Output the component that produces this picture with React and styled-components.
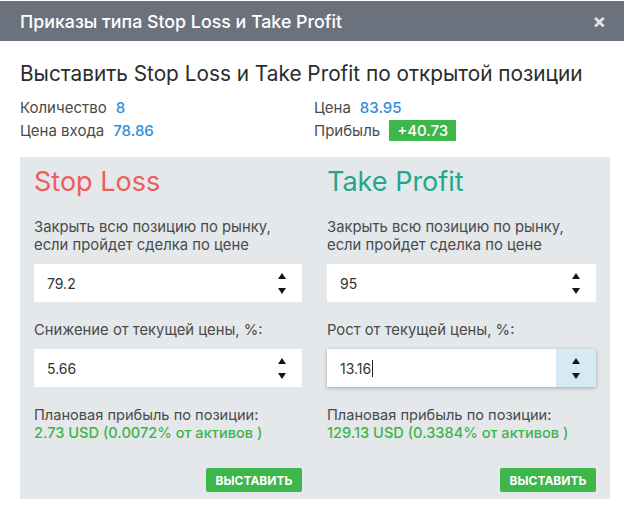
import styled, { createGlobalStyle } from 'styled-components';

const GlobalStyle = createGlobalStyle`
  body {
    margin: 0;
    background: #ffffff;
    font-family: Inter, 'Noto Sans', sans-serif;
  }
`;

const Dialog = styled.div`
  width: 624px;
  height: 515px;
  background: #fff;
  padding-top: 1px;
  box-sizing: border-box;
`;

const Header = styled.div`
  height: 40px;
  background: #6c727d;
  display: flex;
  align-items: center;
  justify-content: space-between;
  padding: 0 18px 0 20px;
`;

const HeaderTitle = styled.div`
  color: #fff;
  font-size: 17.8px;
  font-weight: 500;
`;

const Close = styled.div`
  color: #e4e6ea;
  font-size: 20px;
  font-weight: 700;
  line-height: 1;
`;

const Body = styled.div`
  padding: 20px 14px 0 20px;
`;

const Heading = styled.h2`
  margin: 0;
  font-size: 20.8px;
  font-weight: 400;
  color: #2b2b2b;
  line-height: 26px;
`;

const InfoGrid = styled.div`
  margin-top: 9px;
  display: grid;
  grid-template-columns: 294px auto;
`;

const InfoItem = styled.div`
  display: flex;
  align-items: center;
  gap: 9px;
  font-size: 15px;
  color: #4a4a4a;
  height: 23px;
`;

const Value = styled.span`
  color: #2f8fd8;
  font-weight: 500;
`;

const Badge = styled.span`
  background: #3db64c;
  color: #fff;
  font-weight: 500;
  line-height: 21px;
  padding: 0 8px;
  border-radius: 1px;
`;

const Panel = styled.div`
  margin-top: 15px;
  width: 590px;
  height: 342px;
  background: #e4e8eb;
  padding: 0 14px;
  box-sizing: border-box;
  display: grid;
  grid-template-columns: 268px 269px;
  column-gap: 25px;
`;

const Column = styled.div`
  display: flex;
  flex-direction: column;
`;

const Title = styled.div`
  font-size: 27px;
  font-weight: 400;
  color: ${p => p.$color};
  margin-top: 10px;
  line-height: 30px;
`;

const Label = styled.div`
  font-size: 14.8px;
  color: #4a4a4a;
  line-height: 18px;
  margin-top: ${p => p.$top}px;
`;

const Field = styled.div`
  margin-top: 10px;
  height: 38px;
  background: #fff;
  display: flex;
  align-items: stretch;
  box-shadow: ${p => (p.$focused ? '0 1px 4px rgba(0,0,0,0.28)' : 'none')};
`;

const FieldText = styled.div`
  flex: 1;
  display: flex;
  align-items: center;
  padding-left: 13px;
  font-size: 14px;
  color: #333;
`;

const Caret = styled.span`
  display: inline-block;
  width: 1px;
  height: 17px;
  background: #222;
  margin-left: 1px;
`;

const Spinner = styled.div`
  width: 40px;
  display: flex;
  flex-direction: column;
  align-items: center;
  justify-content: center;
  gap: 9px;
  background: ${p => (p.$focused ? '#d8e9f6' : 'transparent')};
`;

const Result = styled.div`
  margin-top: 19px;
  font-size: 14.6px;
  line-height: 18px;
  color: #4a4a4a;
`;

const Green = styled.div`
  color: #3cb54a;
  font-weight: 500;
`;

const Submit = styled.button`
  margin-top: auto;
  margin-bottom: 7px;
  align-self: flex-end;
  width: 96px;
  height: 24px;
  border: none;
  border-radius: 2px;
  background: #3db64c;
  color: #fff;
  font-family: Inter, sans-serif;
  font-size: 12px;
  font-weight: 700;
  padding: 0;
`;

const Arrows = () => (
  <>
    <svg width="8" height="6" viewBox="0 0 8 6">
      <path d="M4 0 L8 6 L0 6 Z" fill="#151515" />
    </svg>
    <svg width="8" height="6" viewBox="0 0 8 6">
      <path d="M0 0 L8 0 L4 6 Z" fill="#151515" />
    </svg>
  </>
);

const NumberField = ({ value, focused }) => (
  <Field $focused={focused}>
    <FieldText>
      {value}
      {focused && <Caret />}
    </FieldText>
    <Spinner $focused={focused}>
      <Arrows />
    </Spinner>
  </Field>
);

const Side = ({ title, color, price, pctLabel, pct, profit, focused }) => (
  <Column>
    <Title $color={color}>{title}</Title>
    <Label $top={21}>
      Закрыть всю позицию по рынку,
      <br />
      если пройдет сделка по цене
    </Label>
    <NumberField value={price} />
    <Label $top={19}>{pctLabel}</Label>
    <NumberField value={pct} focused={focused} />
    <Result>
      Плановая прибыль по позиции:
      <Green>{profit}</Green>
    </Result>
    <Submit>ВЫСТАВИТЬ</Submit>
  </Column>
);

export default function App() {
  return (
    <>
      <GlobalStyle />
      <Dialog>
        <Header>
          <HeaderTitle>Приказы типа Stop Loss и Take Profit</HeaderTitle>
          <Close>×</Close>
        </Header>
        <Body>
          <Heading>Выставить Stop Loss и Take Profit по открытой позиции</Heading>
          <InfoGrid>
            <InfoItem>
              Количество <Value>8</Value>
            </InfoItem>
            <InfoItem>
              Цена <Value>83.95</Value>
            </InfoItem>
            <InfoItem>
              Цена входа <Value>78.86</Value>
            </InfoItem>
            <InfoItem>
              Прибыль <Badge>+40.73</Badge>
            </InfoItem>
          </InfoGrid>
          <Panel>
            <Side
              title="Stop Loss"
              color="#ef5c5c"
              price="79.2"
              pctLabel="Снижение от текущей цены, %:"
              pct="5.66"
              profit="2.73 USD (0.0072% от активов )"
            />
            <Side
              title="Take Profit"
              color="#22a78e"
              price="95"
              pctLabel="Рост от текущей цены, %:"
              pct="13.16"
              profit="129.13 USD (0.3384% от активов )"
              focused
            />
          </Panel>
        </Body>
      </Dialog>
    </>
  );
}
